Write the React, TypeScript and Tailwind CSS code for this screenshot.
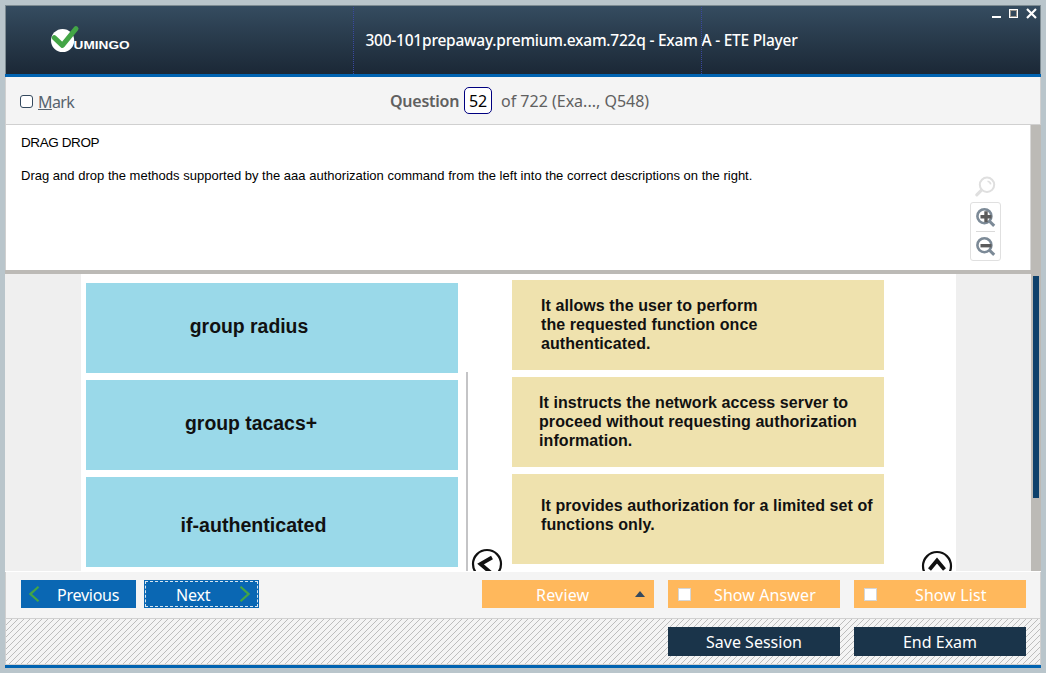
import React from "react";

const ui = "font-['Noto_Sans','Open_Sans',sans-serif]";
const arial = "font-['Liberation_Sans',Arial,sans-serif]";

function Logo() {
  return (
    <svg width="90" height="32" viewBox="0 0 90 32" className="block">
      <circle cx="12.6" cy="17.5" r="11.6" fill="#fff" />
      <path d="M4.2 14.6 L12.4 22.4 L26 5.6" fill="none" stroke="#43a546" strokeWidth="5" strokeLinecap="round" strokeLinejoin="round" />
      <text x="23.6" y="26" fill="#fff" fontFamily="Liberation Sans, sans-serif" fontWeight="700" fontSize="10.6" textLength="56" lengthAdjust="spacingAndGlyphs">UMINGO</text>
    </svg>
  );
}

function WindowControls() {
  return (
    <svg width="48" height="12" viewBox="0 0 48 12" shapeRendering="crispEdges" className="block">
      <rect x="0" y="8" width="9" height="2" fill="#fff" />
      <rect x="17.5" y="1.5" width="8" height="8" fill="none" stroke="#fff" />
      <rect x="18.5" y="2.5" width="6" height="6" fill="none" stroke="#99948c" />
      <path d="M35 1 L44 10 M44 1 L35 10" stroke="#fff" strokeWidth="2.2" shapeRendering="auto" />
    </svg>
  );
}

function Lens({ sign }: { sign: "plus" | "minus" }) {
  return (
    <svg width="20" height="20" viewBox="0 0 20 20" className="block">
      <circle cx="8.4" cy="9.2" r="7" fill="none" stroke="#7c8a97" strokeWidth="2.6" />
      <path d="M13.4 14.2 L18.2 18.8" stroke="#7c8a97" strokeWidth="3" />
      <path d={sign === "plus" ? "M4.5 9.7 H15.5 M10 4.2 V15.2" : "M4.5 9.7 H15.5"} stroke="#5b5b5b" strokeWidth="3.4" />
    </svg>
  );
}

function ZoomTools() {
  return (
    <div className="flex w-[31px] flex-col">
      <svg width="31" height="26" viewBox="0 0 31 26" className="block">
        <circle cx="17" cy="8.8" r="7.2" fill="none" stroke="#dfdfdf" strokeWidth="2" />
        <path d="M11.5 14.2 L6.8 18.8" stroke="#dfdfdf" strokeWidth="3.2" strokeLinecap="round" />
        <path d="M17.5 5.2 A3.7 3.7 0 0 1 20.7 8.4" fill="none" stroke="#dfdfdf" strokeWidth="1.6" />
      </svg>
      <div className="flex h-[59px] flex-col items-center rounded-[3px] border border-[#e0e0e0] bg-white pt-[4px]">
        <Lens sign="plus" />
        <div className="mt-[4px] h-px w-[19px] bg-[#dadada]" />
        <div className="mt-[4px]"><Lens sign="minus" /></div>
      </div>
    </div>
  );
}

function Circle({ d }: { d: string }) {
  return (
    <svg width="32" height="32" viewBox="0 0 32 32" className="block">
      <circle cx="16" cy="16" r="14" fill="#fff" stroke="#111" strokeWidth="2.2" />
      <path d={d} fill="none" stroke="#111" strokeWidth="3.8" />
    </svg>
  );
}

const methods = [
  { label: "group radius", cls: "pr-[46px] pb-[3px] text-[19.4px]" },
  { label: "group tacacs+", cls: "pr-[42px] pb-[3px] text-[19.4px]" },
  { label: "if-authenticated", cls: "pr-[37px] pt-[7px] text-[19.6px]" },
];

const descriptions = [
  { lines: ["It allows the user to perform", "the requested function once", "authenticated."], cls: "pl-[29px] pt-[16px]" },
  { lines: ["It instructs the network access server to", "proceed without requesting authorization", "information."], cls: "pl-[27px] pt-[16px]" },
  { lines: ["It provides authorization for a limited set of", "functions only."], cls: "pl-[29px] pt-[22px]" },
];

function Exhibit() {
  return (
    <div className="relative flex h-[297px] w-[875px] overflow-hidden bg-white pl-[5px]">
      <div className="flex w-[372px] flex-col gap-[7px] pt-[9px]">
        {methods.map((m) => (
          <div key={m.label} className={`flex h-[90px] shrink-0 items-center justify-center bg-[#9ad9e9] font-bold text-[#111] ${arial} ${m.cls}`}>
            {m.label}
          </div>
        ))}
      </div>
      <div className="ml-[8px] mt-[98px] h-[199px] w-[2px] bg-[#c4c4c6]" />
      <div className="ml-[44px] flex w-[372px] flex-col gap-[7px] pt-[6px]">
        {descriptions.map((d) => (
          <div key={d.lines[0]} className={`h-[90px] shrink-0 whitespace-nowrap bg-[#efe2ae] text-[16px] font-bold leading-[19px] tracking-[0.08px] text-[#111] ${arial} ${d.cls}`}>
            {d.lines.map((l) => <div key={l}>{l}</div>)}
          </div>
        ))}
      </div>
      <div className="absolute left-[390px] top-[274px]"><Circle d="M21 9.5 L9.5 16 L19.5 24.5" /></div>
      <div className="absolute left-[840px] top-[276px]"><Circle d="M8.5 19.5 L16 10.5 L23.5 19.5" /></div>
    </div>
  );
}

function OrangeButton({ label, check, cls }: { label: string; check?: boolean; cls: string }) {
  return (
    <button className={`flex h-[28px] w-[172px] items-center bg-[#ffb85c] text-[16px] text-white ${ui}`}>
      {check && <span className="ml-[10px] h-[13px] w-[13px] shrink-0 border border-[#d5d5d5] bg-white" />}
      <span className={`whitespace-nowrap pt-[2px] ${cls}`}>{label}</span>
      {!check && (
        <svg width="10" height="6" viewBox="0 0 10 6" className="ml-auto mr-[9px]"><path d="M5 0 L10 6 H0 Z" fill="#34495e" /></svg>
      )}
    </button>
  );
}

export default function App() {
  return (
    <div className={`h-[673px] w-[1046px] overflow-hidden bg-[#b9c5cb] p-[5px] ${ui}`}>
      <div className="flex h-[663px] w-[1036px] flex-col">
        <header className="relative flex h-[69px] shrink-0 items-center justify-center border-x border-t border-[#7d8b92] bg-linear-to-b from-[#354c60] to-[#1b2836]">
          <div className="absolute left-[44px] top-[17px]"><Logo /></div>
          <div className="absolute left-[347px] top-[1px] h-[67px] border-l border-dotted border-[#3a48a0]" />
          <div className="absolute left-[695px] top-[1px] h-[67px] border-l border-dotted border-[#3a48a0]" />
          <h1 className="pl-[117px] pt-[2px] text-[15.5px] font-medium tracking-[-0.23px] whitespace-nowrap text-white">300-101prepaway.premium.exam.722q - Exam A - ETE Player</h1>
          <div className="absolute right-0 top-[2px]"><WindowControls /></div>
        </header>
        <div className="h-[3px] shrink-0 bg-[#0063b1]" />
        <div className="flex h-[48px] shrink-0 items-center border-x border-b border-[#d0d0d0] bg-[#f4f4f4] text-[16px] text-[#606060]">
          <span className="ml-[14px] mt-[2px] h-[13px] w-[13px] rounded-[3px] border border-[#34495e] bg-white" />
          <span className="ml-[5px] w-[37px] pt-[3px] text-[16px] tracking-[-0.6px] text-[#57636e]"><span className="underline">M</span>ark</span>
          <span className="ml-[315px] w-[70px] pt-px font-semibold tracking-[-0.25px]">Question</span>
          <span className="ml-[4px] flex h-[27px] w-[28px] items-center justify-center rounded-[5px] border border-[#000080] bg-white pt-px text-[16px] tracking-[-0.2px] text-black">52</span>
          <span className="ml-[9px] whitespace-nowrap pt-px text-[16px]">of 722 (Exa..., Q548)</span>
        </div>
        <section className={`flex h-[145px] shrink-0 bg-white text-black ${arial}`}>
          <div className="w-[965px] border-l border-[#d0d0d0] pl-[15px] pt-[10px]">
            <p className="text-[13.5px] leading-[16px] tracking-[-0.4px]">DRAG DROP</p>
            <p className="mt-[17px] whitespace-nowrap text-[13px] leading-[16px] tracking-[0.012px]">Drag and drop the methods supported by the aaa authorization command from the left into the correct descriptions on the right.</p>
          </div>
          <div className="pt-[51px]"><ZoomTools /></div>
          <div className="ml-auto w-[11px] border-l border-[#d8d8d8] bg-[#bcbab6]" />
        </section>
        <div className="h-[4px] shrink-0 bg-[#bcbab6]" />
        <section className="flex h-[297px] shrink-0 bg-[#efefef] pl-[76px]">
          <Exhibit />
          <div className="ml-auto w-[10px] bg-[#bcbab6] pl-[2px] pt-[2px]"><div className="h-[222px] w-[6px] bg-[#0d406b]" /></div>
        </section>
        <div className="h-px shrink-0 bg-white" />
        <nav className="flex h-[47px] shrink-0 border-x border-b border-[#d0d0d0] bg-[#f4f4f4] pl-[15px] pt-[8px]">
          <button className="flex h-[28px] w-[115px] items-center bg-[#0a67b3] text-[16px] text-white">
            <svg width="11" height="16" viewBox="0 0 11 16" className="ml-[8px]"><path d="M9.5 0.8 L1.5 8 L9.5 15.2" fill="none" stroke="#43a546" strokeWidth="2.2" /></svg>
            <span className="ml-[17px] pt-[2px] tracking-[-0.25px]">Previous</span>
          </button>
          <button className="ml-[8px] flex h-[28px] w-[115px] items-center border border-[#0a67b3] bg-[#0a67b3] text-[16px] text-white outline-1 -outline-offset-2 outline-dashed outline-[#d8e6f0]">
            <span className="ml-[31px] pt-[2px] tracking-[-0.2px]">Next</span>
            <svg width="11" height="16" viewBox="0 0 11 16" className="ml-auto mr-[8px]"><path d="M1.5 0.8 L9.5 8 L1.5 15.2" fill="none" stroke="#43a546" strokeWidth="2.2" /></svg>
          </button>
          <div className="ml-[223px] flex gap-[14px]">
            <OrangeButton label="Review" cls="ml-[54px] tracking-[0.2px]" />
            <OrangeButton label="Show Answer" check cls="ml-[23px] tracking-[0.1px]" />
            <OrangeButton label="Show List" check cls="ml-[38px] tracking-[0.1px]" />
          </div>
        </nav>
        <footer className="relative flex h-[46px] shrink-0 justify-end gap-[14px] border-x border-b border-[#d0d0d0] bg-[#f4f4f4] pr-[14px] pt-[8px]">
          <svg className="absolute inset-0 h-full w-full" shapeRendering="crispEdges">
            <defs>
              <pattern id="hatch" width="6" height="6" patternUnits="userSpaceOnUse">
                {[0, 1, 2, 3, 4, 5].map((i) => <rect key={i} x={5 - i} y={i} width="1" height="1" fill="#bdbdbd" />)}
              </pattern>
            </defs>
            <rect width="100%" height="100%" fill="url(#hatch)" />
          </svg>
          <button className="relative h-[29px] w-[172px] bg-[#1a344a] pt-px text-[16px] text-white">Save Session</button>
          <button className="relative h-[29px] w-[172px] bg-[#1a344a] pt-px text-[16px] text-white">End Exam</button>
        </footer>
        <div className="h-[3px] shrink-0 bg-[#0063b1]" />
      </div>
    </div>
  );
}
